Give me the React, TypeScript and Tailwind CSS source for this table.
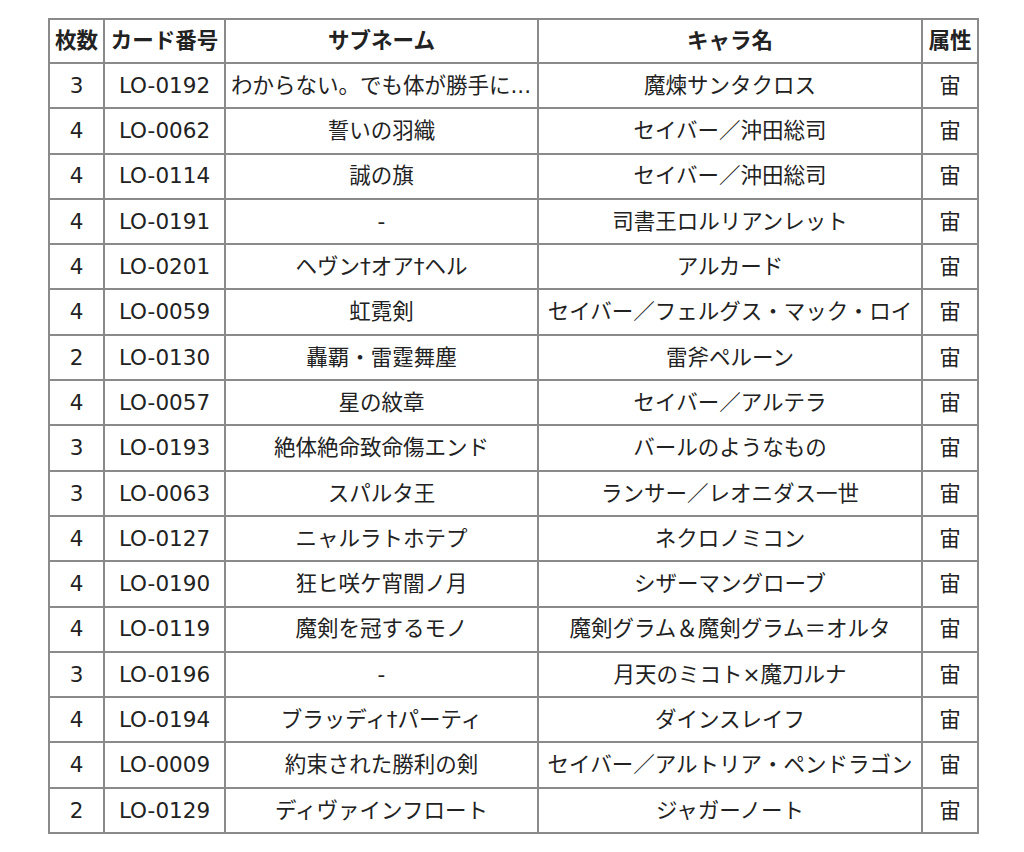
const rows: [string, string, string, string][] = [
  ["3", "LO-0192", "わからない。でも体が勝手に...", "魔煉サンタクロス"],
  ["4", "LO-0062", "誓いの羽織", "セイバー／沖田総司"],
  ["4", "LO-0114", "誠の旗", "セイバー／沖田総司"],
  ["4", "LO-0191", "-", "司書王ロルリアンレット"],
  ["4", "LO-0201", "ヘヴン†オア†ヘル", "アルカード"],
  ["4", "LO-0059", "虹霓剣", "セイバー／フェルグス・マック・ロイ"],
  ["2", "LO-0130", "轟覇・雷霆舞塵", "雷斧ペルーン"],
  ["4", "LO-0057", "星の紋章", "セイバー／アルテラ"],
  ["3", "LO-0193", "絶体絶命致命傷エンド", "バールのようなもの"],
  ["3", "LO-0063", "スパルタ王", "ランサー／レオニダス一世"],
  ["4", "LO-0127", "ニャルラトホテプ", "ネクロノミコン"],
  ["4", "LO-0190", "狂ヒ咲ケ宵闇ノ月", "シザーマングローブ"],
  ["4", "LO-0119", "魔剣を冠するモノ", "魔剣グラム＆魔剣グラム＝オルタ"],
  ["3", "LO-0196", "-", "月天のミコト×魔刀ルナ"],
  ["4", "LO-0194", "ブラッディ†パーティ", "ダインスレイフ"],
  ["4", "LO-0009", "約束された勝利の剣", "セイバー／アルトリア・ペンドラゴン"],
  ["2", "LO-0129", "ディヴァインフロート", "ジャガーノート"],
];

export default function App() {
  return (
    <div className="min-h-[852px] w-[1024px] bg-white pl-[48px] pt-[18px] text-[#222] font-['DejaVu_Sans','Noto_Sans_CJK_JP',sans-serif]">
      <table className="w-[929px] table-fixed border-collapse text-[21.5px] leading-none">
        <colgroup>
          <col className="w-[55px]" />
          <col className="w-[121px]" />
          <col className="w-[313px]" />
          <col className="w-[384px]" />
          <col className="w-[56px]" />
        </colgroup>
        <thead>
          <tr className="h-[44px] font-bold">
            <th className="border-2 border-[#8a8a8a] px-0 text-center">枚数</th>
            <th className="border-2 border-[#8a8a8a] px-0 text-center">カード番号</th>
            <th className="border-2 border-[#8a8a8a] text-center">サブネーム</th>
            <th className="border-2 border-[#8a8a8a] text-center">キャラ名</th>
            <th className="border-2 border-[#8a8a8a] px-0 text-center">属性</th>
          </tr>
        </thead>
        <tbody>
          {rows.map(([count, no, sub, chara], i) => (
            <tr key={i} className="h-[45.3px]">
              <td className="border-2 border-[#8a8a8a] text-center">{count}</td>
              <td className="border-2 border-[#8a8a8a] text-center">{no}</td>
              <td
                className={`border-2 border-[#8a8a8a] whitespace-nowrap ${
                  i === 0 ? "pl-[5px] text-left" : "text-center"
                }`}
              >
                {sub}
              </td>
              <td className="border-2 border-[#8a8a8a] whitespace-nowrap text-center">{chara}</td>
              <td className="border-2 border-[#8a8a8a] text-center">宙</td>
            </tr>
          ))}
        </tbody>
      </table>
    </div>
  );
}
